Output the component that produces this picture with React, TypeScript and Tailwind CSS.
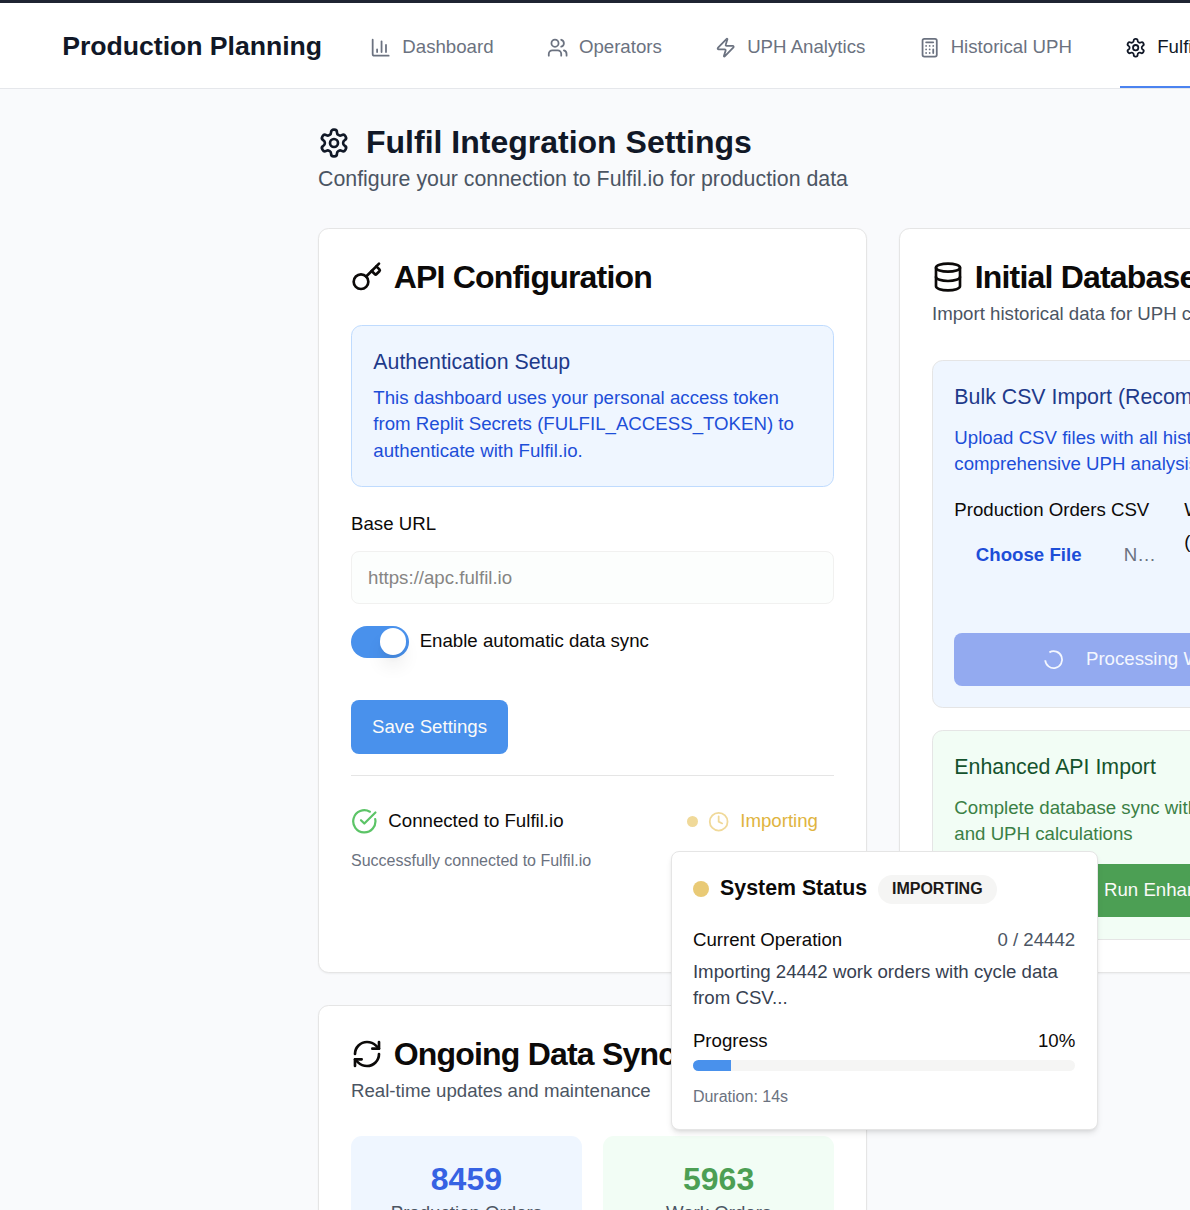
import type { ReactNode } from "react";
import { Calculator, ChartColumn, CircleCheckBig, Clock, Database, Key, RefreshCw, Users, Zap } from "lucide-react";

function Gear({ className }: { className: string }) {
  return (
    <svg className={className} viewBox="0 0 24 24" fill="none" stroke="currentColor" strokeWidth="2" strokeLinecap="round" strokeLinejoin="round">
      <path d="M12.22 2h-.44a2 2 0 0 0-2 2v.18a2 2 0 0 1-1 1.73l-.43.25a2 2 0 0 1-2 0l-.15-.08a2 2 0 0 0-2.73.73l-.22.38a2 2 0 0 0 .73 2.73l.15.1a2 2 0 0 1 1 1.72v.51a2 2 0 0 1-1 1.74l-.15.09a2 2 0 0 0-.73 2.73l.22.38a2 2 0 0 0 2.73.73l.15-.08a2 2 0 0 1 2 0l.43.25a2 2 0 0 1 1 1.73V20a2 2 0 0 0 2 2h.44a2 2 0 0 0 2-2v-.18a2 2 0 0 1 1-1.73l.43-.25a2 2 0 0 1 2 0l.15.08a2 2 0 0 0 2.73-.73l.22-.39a2 2 0 0 0-.73-2.73l-.15-.08a2 2 0 0 1-1-1.74v-.5a2 2 0 0 1 1-1.74l.15-.09a2 2 0 0 0 .73-2.73l-.22-.38a2 2 0 0 0-2.73-.73l-.15.08a2 2 0 0 1-2 0l-.43-.25a2 2 0 0 1-1-1.73V4a2 2 0 0 0-2-2z" />
      <circle cx="12" cy="12" r="3" />
    </svg>
  );
}

function NavItem({ icon, label, active }: { icon: ReactNode; label: string; active?: boolean }) {
  return (
    <a className={`flex h-full shrink-0 items-center gap-[10.67px] border-b-2 px-[5.33px] pt-1.5 whitespace-nowrap ${active ? "border-[#4b83f0] text-[#111827]" : "border-transparent text-[#6b7280]"}`}>
      {icon}
      <span>{label}</span>
    </a>
  );
}

function Card({ children }: { children: ReactNode }) {
  return <section className="min-w-0 rounded-[10.67px] border border-[#e5e5e5] bg-white p-8 shadow-xs">{children}</section>;
}

function CardTitle({ icon, children }: { icon: ReactNode; children: ReactNode }) {
  return (
    <h2 className="flex items-center gap-[10.67px] text-[32px] leading-[32px] font-bold tracking-[-0.8px] whitespace-nowrap text-[#0c0a09]">
      {icon}
      <span>{children}</span>
    </h2>
  );
}

function StatusPopover() {
  return (
    <div className="absolute top-[43px] left-[-16px] z-10 h-[279px] w-[427px] rounded-lg border border-[#e5e5e5] bg-white p-[21.33px] pt-[23px] whitespace-normal text-[#0c0a09] shadow-md">
      <div className="flex h-[29px] items-center gap-[11.2px]">
        <span className="size-4 rounded-full bg-[#e9ca76]" />
        <span className="relative -top-px text-[21.33px] font-bold">System Status</span>
        <span className="flex h-[29px] w-[119px] items-center justify-center rounded-full bg-[#f5f5f4] pr-px text-[16px] font-bold text-[#1c1917]">
          IMPORTING
        </span>
      </div>
      <div className="mt-[20.33px] flex h-[32px] items-center justify-between">
        <span>Current Operation</span>
        <span className="text-[#4b5563]">0 / 24442</span>
      </div>
      <p className="mt-[2.4px] leading-[26.67px] text-[#374151]">Importing 24442 work orders with cycle data from CSV...</p>
      <div className="mt-[15.6px] flex justify-between leading-[26.67px]">
        <span>Progress</span>
        <span>10%</span>
      </div>
      <div className="mt-[5.33px] h-[11px] overflow-hidden rounded-full bg-[#f5f5f4]">
        <div className="h-full w-1/10 bg-[#4991ec]" />
      </div>
      <p className="mt-[15px] text-[16px] leading-[21.33px] text-[#6b7280]">Duration: 14s</p>
    </div>
  );
}

function ApiConfiguration() {
  return (
    <Card>
      <CardTitle icon={<Key className="size-8" />}>API Configuration</CardTitle>
      <div className="mt-8 rounded-[10.67px] border border-[#bfdbfe] bg-[#eff6ff] p-[21.33px]">
        <h3 className="text-[21.33px] leading-[30px] text-[#1e3a8a]">Authentication Setup</h3>
        <p className="mt-[7.4px] leading-[26.67px] text-[#1d4ed8]">
          This dashboard uses your personal access token from Replit Secrets (FULFIL_ACCESS_TOKEN) to authenticate with Fulfil.io.
        </p>
      </div>
      <label className="mt-[21.27px] block leading-[32px]">Base URL</label>
      <div className="mt-[10.67px] flex h-[53.3px] items-center rounded-lg border border-[#f1f1f0] bg-[#fcfefd] px-4 pt-px text-[#868583]">https://apc.fulfil.io</div>
      <div className="mt-[21.33px] flex h-8 items-center gap-[10.67px]">
        <span className="flex h-8 w-[58px] items-center justify-end rounded-full bg-[#4991ec] pr-[2.67px]">
          <span className="size-[26.67px] rounded-full bg-white shadow-[0_13px_20px_-4px_rgba(0,0,0,0.12),0_5px_8px_-5px_rgba(0,0,0,0.12)]" />
        </span>
        <span>Enable automatic data sync</span>
      </div>
      <button className="mt-[42.67px] h-[53.3px] w-[157px] rounded-lg bg-[#4991ec] text-[#fafaf9]">Save Settings</button>
      <div className="mt-[21.33px] flex items-center justify-between border-t border-[#e5e5e5] pt-8">
        <div className="flex h-[26.67px] items-center gap-[10.67px]">
          <CircleCheckBig className="size-[26.67px] text-[#5cc467]" />
          <span>Connected to Fulfil.io</span>
        </div>
        <div className="relative flex items-center gap-[10.67px] pr-4 whitespace-nowrap">
          <span className="size-[11px] rounded-full bg-[#f0d999]" />
          <Clock className="size-[21.33px] text-[#f0d999]" />
          <span className="text-[#e0b43e]">Importing</span>
          <StatusPopover />
        </div>
      </div>
      <p className="mt-[15px] text-[16px] leading-[21.33px] text-[#6b7280]">Successfully connected to Fulfil.io</p>
    </Card>
  );
}

function InitialImport() {
  return (
    <Card>
      <CardTitle icon={<Database className="size-8" />}>Initial Database Import</CardTitle>
      <p className="mt-2 leading-[26.67px] text-[#4b5563]">Import historical data for UPH calculations</p>
      <div className="mt-[32.33px] rounded-[10.67px] border border-[#e5e5e5] bg-[#eff6ff] p-[21.33px] pb-[21px]">
        <h3 className="text-[21.33px] leading-[30px] text-[#1e3a8a]">Bulk CSV Import (Recommended)</h3>
        <p className="mt-[12.33px] leading-[26.67px] text-[#1d4ed8]">
          Upload CSV files with all historical data for
          <br />
          comprehensive UPH analysis.
        </p>
        <div className="mt-4 grid h-[139px] grid-cols-2 gap-[21.33px] leading-[32px]">
          <div className="whitespace-nowrap">
            <div>Production Orders CSV</div>
            <div className="mt-[13px] flex items-center pl-[21.5px]">
              <span className="w-[148px] font-bold text-[#1d4ed8]">Choose File</span>
              <span className="text-[#6b7280]">N…</span>
            </div>
          </div>
          <div>
            Work Orders CSV
            <br />
            (Optional)
          </div>
        </div>
        <div className="flex h-[53.3px] items-center justify-center gap-[22px] rounded-lg bg-[#93aaf0] whitespace-nowrap text-[#f4f7fe]">
          <svg className="size-[21.33px]" viewBox="0 0 24 24" fill="none" stroke="currentColor" strokeWidth="2">
            <path d="M7.2 3.8A9.5 9.5 0 1 1 2.52 12.6" />
          </svg>
          <span>Processing Work Orders...</span>
        </div>
      </div>
      <div className="mt-[22px] rounded-[10.67px] border border-[#e5e5e5] bg-[#f2fdf5] p-[21.33px]">
        <h3 className="text-[21.33px] leading-[29px] text-[#14532d]">Enhanced API Import</h3>
        <p className="mt-[13px] leading-[26.67px] text-[#3b8045]">
          Complete database sync with work cycles
          <br />
          and UPH calculations
        </p>
        <div className="mt-[16px] flex h-[53.3px] items-center rounded-lg bg-[#4c9f54] pl-[149.7px] whitespace-nowrap text-[#fafaf9]">
          <span>Run Enhanced API Import</span>
        </div>
      </div>
    </Card>
  );
}

function Stat({ value, label, className, valueClass }: { value: string; label: string; className: string; valueClass: string }) {
  return (
    <div className={`rounded-[10.67px] p-[21.33px] text-center ${className}`}>
      <div className={`text-[32px] leading-[42.67px] font-bold ${valueClass}`}>{value}</div>
      <div className="leading-[26.67px] text-[#4b5563]">{label}</div>
    </div>
  );
}

export default function App() {
  return (
    <div className="h-[1210px] w-[1190px] overflow-hidden bg-[#f9fafc] font-['Liberation_Sans',Arial,sans-serif] text-[18.67px] leading-[26.67px] text-[#0c0a09]">
      <header className="flex h-[89px] w-[1766px] items-center border-t-3 border-b border-t-[#1f2432] border-b-[#e5e7eb] bg-white">
        <h1 className="mr-[43px] ml-[62.3px] shrink-0 pt-0.5 text-[26.67px] leading-[37px] font-bold tracking-[-0.05px] whitespace-nowrap text-[#111827]">Production Planning</h1>
        <nav className="flex h-full gap-[42.67px]">
          <NavItem icon={<ChartColumn className="size-[21.33px]" />} label="Dashboard" />
          <NavItem icon={<Users className="size-[21.33px]" />} label="Operators" />
          <NavItem icon={<Zap className="size-[21.33px]" />} label="UPH Analytics" />
          <NavItem icon={<Calculator className="size-[21.33px]" />} label="Historical UPH" />
          <NavItem icon={<Gear className="size-[21.33px]" />} label="Fulfil Settings" active />
        </nav>
      </header>
      <main className="ml-[318px] w-[1130px] pt-8">
        <div className="flex h-[42.67px] items-center gap-4 text-[#111827]">
          <Gear className="mt-px size-8" />
          <h1 className="text-[32px] font-bold">Fulfil Integration Settings</h1>
        </div>
        <p className="-mt-px text-[21.33px] leading-[32px] text-[#4b5563]">Configure your connection to Fulfil.io for production data</p>
        <div className="mt-[33.33px] grid grid-cols-2 gap-8">
          <ApiConfiguration />
          <InitialImport />
          <Card>
            <CardTitle icon={<RefreshCw className="size-8" />}>Ongoing Data Sync</CardTitle>
            <p className="mt-2 leading-[26.67px] text-[#4b5563]">Real-time updates and maintenance</p>
            <div className="mt-8 grid grid-cols-2 gap-[21.33px]">
              <Stat value="8459" label="Production Orders" className="bg-[#eff6ff]" valueClass="text-[#3662e3]" />
              <Stat value="5963" label="Work Orders" className="bg-[#f2fdf5]" valueClass="text-[#4c9f54]" />
            </div>
          </Card>
        </div>
      </main>
    </div>
  );
}
